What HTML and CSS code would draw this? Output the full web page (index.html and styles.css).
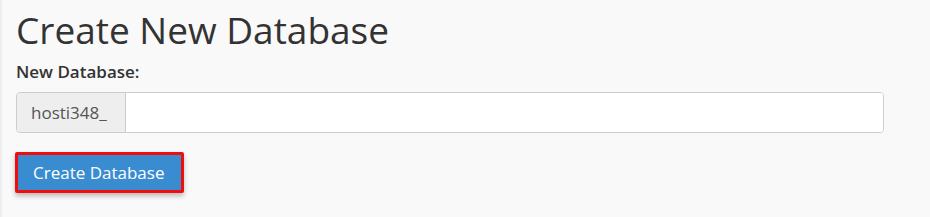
FILE: index.html
```html
<!DOCTYPE html>
<html lang="en">
<head>
    <meta charset="UTF-8">
    <title>Create New Database</title>
    <link rel="stylesheet" href="styles.css">
</head>
<body>
    <div class="page">
        <h1 class="title">Create New Database</h1>
        <form class="db-form">
            <label class="label" for="db">New Database:</label>
            <div class="input-group">
                <span class="prefix">hosti348_</span>
                <input class="field" id="db" type="text">
            </div>
            <div class="actions">
                <button class="btn" type="button">Create Database</button>
            </div>
        </form>
    </div>
</body>
</html>
```

FILE: styles.css
```css
*{
    margin: 0;
    padding: 0;
    box-sizing: border-box;
}
html,body{
    width: 100%;
    height: 100%;
}
body{
    background: #f9f9f9;
    font-family: "Open Sans", "Liberation Sans", sans-serif;
    color: #333;
    border-left: 2px solid #eeeeee;
}
.page{
    padding: 6px 46px 0 14px;
}
.title{
    font-size: 37px;
    font-weight: 400;
    line-height: 48px;
    color: #333;
}
.label{
    display: block;
    margin-top: 6px;
    font-size: 17px;
    font-weight: 600;
    line-height: 24px;
}
.input-group{
    display: flex;
    margin-top: 8px;
    height: 41px;
    border: 1px solid #cccccc;
    border-radius: 4px;
    background: #fff;
    overflow: hidden;
}
.prefix{
    display: flex;
    align-items: center;
    width: 109px;
    padding-left: 14px;
    background: #eeeeee;
    border-right: 1px solid #cccccc;
    font-size: 17px;
    color: #555;
}
.field{
    flex: 1;
    border: none;
    outline: none;
    background: #fff;
}
.actions{
    margin-top: 19px;
}
.btn{
    display: inline-block;
    margin-left: -1px;
    border: 3px solid #f20d0d;
    border-radius: 2px;
    background: #3a8cd1;
    color: #fff;
    font-family: inherit;
    font-size: 17px;
    line-height: 23px;
    padding: 6px 17px 6px 15px;
    box-shadow: 0 3px 5px rgba(0,0,0,0.25);
}
```
